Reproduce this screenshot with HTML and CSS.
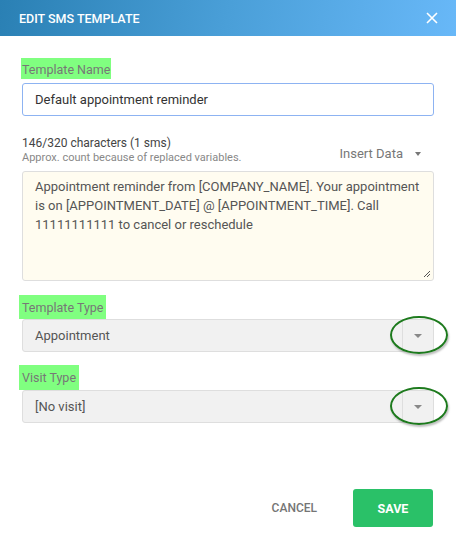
FILE: index.html
```html
<!DOCTYPE html>
<html>
<head>
<meta charset="utf-8">
<link rel="stylesheet" href="styles.css">
</head>
<body>
<div class="dialog">
  <div class="header">
    <span class="title">EDIT SMS TEMPLATE</span>
    <svg class="close" width="12" height="12" viewBox="0 0 12 12"><path d="M1 1L11 11M11 1L1 11" stroke="#fff" stroke-width="1.6" fill="none"/></svg>
  </div>
  <div class="content">
    <div class="label name-label"><span class="hl">Template Name</span></div>
    <div class="input">Default appointment reminder</div>

    <div class="counter-row">
      <div class="counter">
        <div class="count">146/320 characters (1 sms)</div>
        <div class="approx">Approx. count because of replaced variables.</div>
      </div>
      <div class="insert">Insert Data <span class="caret small"></span></div>
    </div>
    <div class="textarea">Appointment reminder from [COMPANY_NAME]. Your appointment is on [APPOINTMENT_DATE] @ [APPOINTMENT_TIME]. Call 11111111111 to cancel or reschedule
      <svg class="grip" width="9" height="9" viewBox="0 0 9 9"><path d="M8 2L2 8M8 5L5 8" stroke="#555" stroke-width="1"/></svg>
    </div>

    <div class="label type-label"><span class="hl hl-type">Template Type</span></div>
    <div class="select">
      <span class="value">Appointment</span>
      <span class="arrow"><span class="caret"></span></span>
      <span class="ring"></span>
    </div>

    <div class="label visit-label"><span class="hl hl-visit">Visit Type</span></div>
    <div class="select">
      <span class="value">[No visit]</span>
      <span class="arrow"><span class="caret"></span></span>
      <span class="ring"></span>
    </div>
  </div>
  <div class="footer">
    <button class="btn cancel">CANCEL</button>
    <button class="btn save">SAVE</button>
  </div>
</div>
</body>
</html>
```
FILE: styles.css
```css
* { box-sizing: border-box; }
html, body { margin: 0; padding: 0; background: #fff; }
body { font-family: Roboto, "Liberation Sans", sans-serif; width: 456px; height: 547px; overflow: hidden; }

.dialog { width: 456px; }

.header {
  height: 36px;
  background: linear-gradient(100deg, #2a80b4 0%, #4a9fd8 50%, #68b8f8 100%);
  display: flex;
  align-items: center;
  justify-content: space-between;
  padding: 0 18px 0 19px;
}
.title { color: #fff; font-size: 12.5px; font-weight: 500; letter-spacing: 0; }
.close { display: block; }

.content { padding: 22px 22px 0 22px; }

.label { font-size: 12.5px; color: #777; height: 25px; }
.hl {
  display: inline-block;
  background: #80ff80;
  height: 21px;
  line-height: 23px;
  padding: 0 1px 0 0;
  margin-left: -1px;
  padding-left: 1px;
}
.name-label { height: 25px; margin-top: 0; }

.input {
  height: 33px;
  border: 1px solid #8db3f2;
  border-radius: 3px;
  padding: 0 12px;
  font-size: 13px;
  color: #333;
  line-height: 31px;
}

.counter-row {
  display: flex;
  justify-content: space-between;
  align-items: flex-end;
  margin-top: 19px;
  padding-right: 13px;
}
.count { font-size: 12px; color: #444; line-height: 16px; }
.approx { font-size: 11px; color: #888; line-height: 14px; margin-top: 0; }
.insert { font-size: 13px; color: #777; display: flex; align-items: center; gap: 12px; margin-bottom: 4px; }

.caret {
  display: inline-block;
  width: 0; height: 0;
  border-left: 4px solid transparent;
  border-right: 4px solid transparent;
  border-top: 4px solid #777;
}
.caret.small { border-left-width: 3.5px; border-right-width: 3.5px; border-top-width: 4px; }

.textarea {
  position: relative;
  margin-top: 6px;
  height: 110px;
  background: #fffcf0;
  border: 1px solid #dedede;
  border-radius: 3px;
  padding: 5px 2px 6px 12px;
  font-size: 13px;
  line-height: 19px;
  color: #555;
}
.grip { position: absolute; right: 2px; bottom: 2px; }

.type-label { margin-top: 14px; height: 24px; }
.visit-label { margin-top: 13px; height: 25px; }
.hl-type, .hl-visit { height: 24px; line-height: 25px; margin-left: -3px; padding-left: 3px; padding-right: 3px; }
.hl-visit { height: 25px; }

.select {
  position: relative;
  height: 33px;
  background: #f1f1f1;
  border: 1px solid #dedede;
  border-radius: 3px;
  display: flex;
  align-items: center;
  font-size: 13px;
  color: #555;
}
.select .value { flex: 1; padding-left: 12px; }
.select .arrow {
  width: 31px;
  height: 100%;
  border-left: 1px solid #dedede;
  display: flex;
  align-items: center;
  justify-content: center;
}
.select .arrow .caret { border-top-color: #888; }

.ring {
  position: absolute;
  left: 367px;
  top: -4px;
  width: 58px;
  height: 38px;
  border: 2px solid #1d7a1d;
  border-radius: 50%;
  box-shadow: 1px 2px 2px rgba(0,0,0,0.25);
}

.footer {
  display: flex;
  justify-content: flex-end;
  align-items: center;
  gap: 36px;
  margin-top: 66px;
  padding-right: 23px;
}
.btn {
  font-family: Roboto, "Liberation Sans", sans-serif;
  border: none;
  font-size: 12px;
  font-weight: 500;
  cursor: pointer;
}
.cancel { background: none; color: #757575; padding: 0; }
.save {
  background: #2ac168;
  color: #fff;
  font-weight: 700;
  width: 80px;
  height: 38px;
  border-radius: 3px;
  font-size: 12.5px;
}
```
